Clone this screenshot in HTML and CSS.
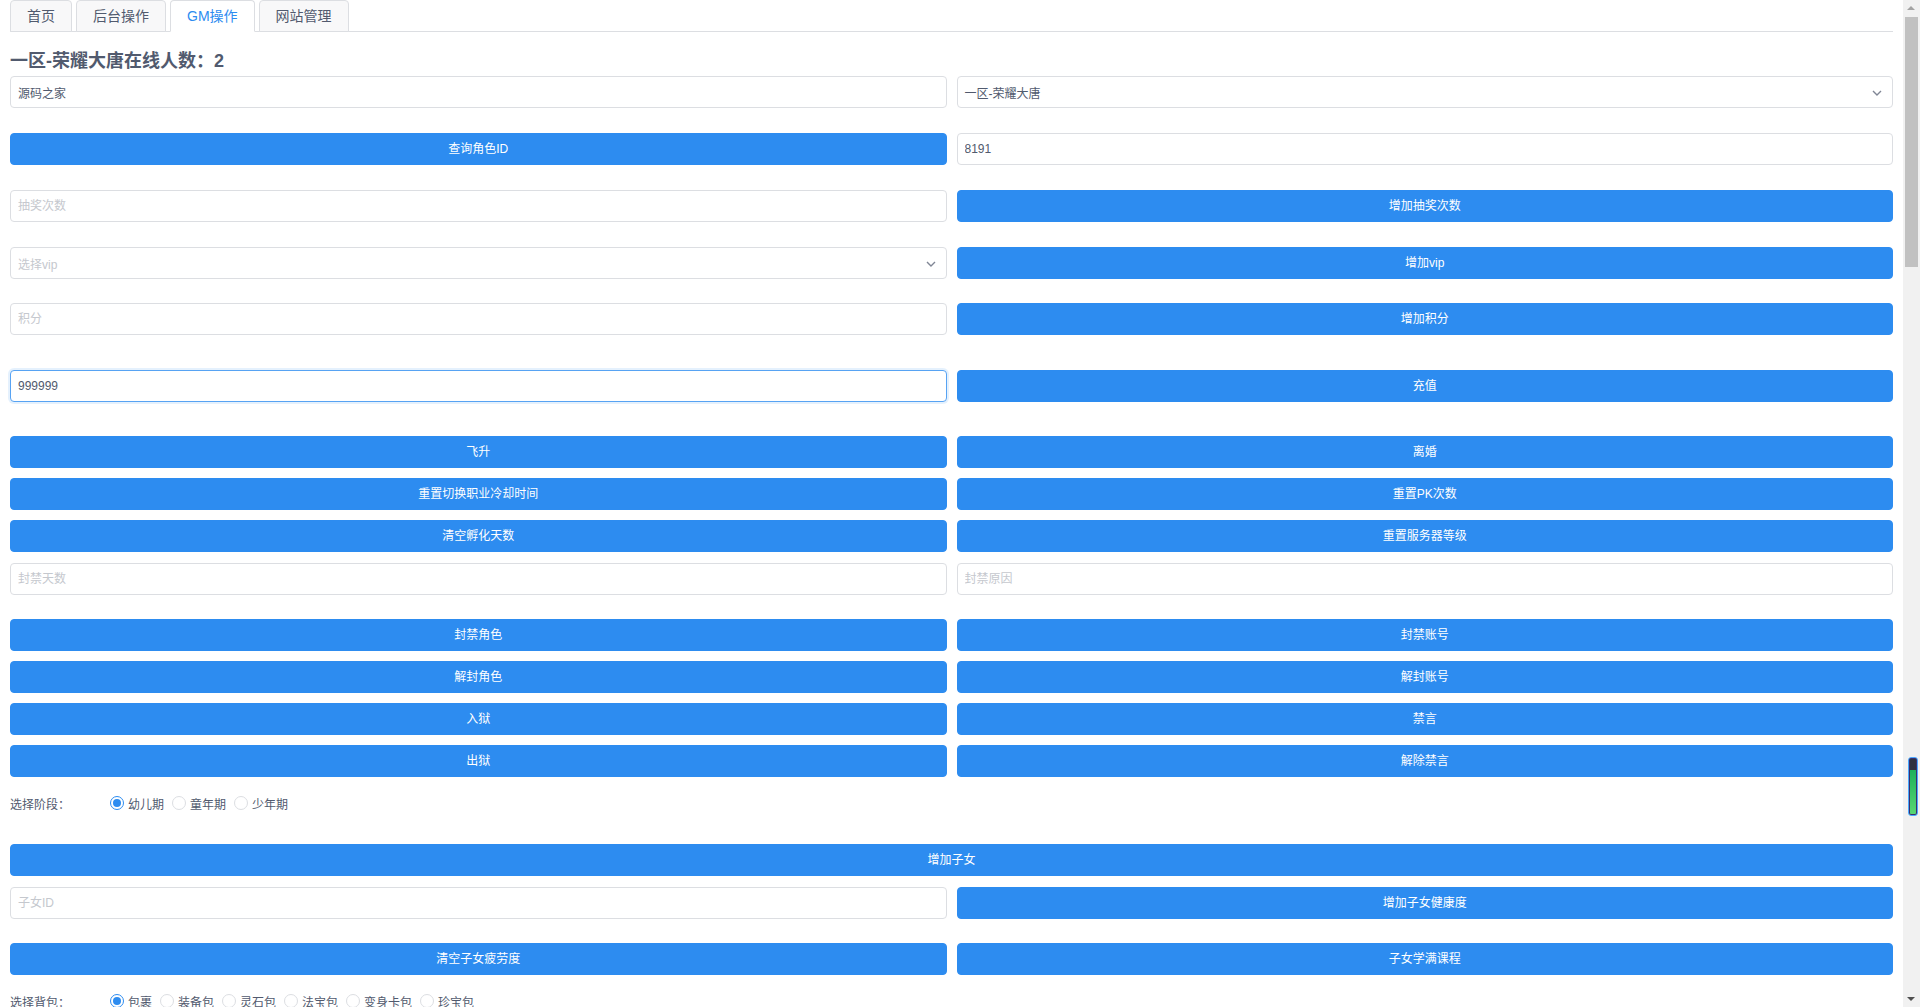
FILE: index.html
```html
<!DOCTYPE html>
<html lang="zh-CN">
<head>
  <meta charset="UTF-8" />
  <meta name="viewport" content="width=device-width, initial-scale=1.0"/>
  <title>GM操作</title>
  <link rel="stylesheet" href="styles.css">
</head>
<body>

  <!-- 顶部标签页 -->
  <div class="tabs">
    <div class="tab">首页</div>
    <div class="tab">后台操作</div>
    <div class="tab active">GM操作</div>
    <div class="tab">网站管理</div>
  </div>

  <div class="panel">
    <h3 class="online">一区-荣耀大唐在线人数：2</h3>

    <div class="row">
      <input class="ipt" type="text" value="源码之家" />
      <div class="select">
        <span>一区-荣耀大唐</span>
        <svg class="arrow" viewBox="0 0 12 12"><polyline points="2,4 6,8 10,4" /></svg>
      </div>
    </div>

    <div class="row m25">
      <button class="btn">查询角色ID</button>
      <input class="ipt" type="text" value="8191" />
    </div>

    <div class="row m25">
      <input class="ipt" type="text" placeholder="抽奖次数" />
      <button class="btn">增加抽奖次数</button>
    </div>

    <div class="row m25">
      <div class="select">
        <span class="ph">选择vip</span>
        <svg class="arrow" viewBox="0 0 12 12"><polyline points="2,4 6,8 10,4" /></svg>
      </div>
      <button class="btn">增加vip</button>
    </div>

    <div class="row m24">
      <input class="ipt" type="text" placeholder="积分" />
      <button class="btn">增加积分</button>
    </div>

    <div class="row m35">
      <input class="ipt focus" type="text" value="999999" />
      <button class="btn">充值</button>
    </div>

    <div class="row m34">
      <button class="btn">飞升</button>
      <button class="btn">离婚</button>
    </div>
    <div class="row">
      <button class="btn">重置切换职业冷却时间</button>
      <button class="btn">重置PK次数</button>
    </div>
    <div class="row">
      <button class="btn">清空孵化天数</button>
      <button class="btn">重置服务器等级</button>
    </div>

    <div class="row m11">
      <input class="ipt" type="text" placeholder="封禁天数" />
      <input class="ipt" type="text" placeholder="封禁原因" />
    </div>

    <div class="row m24">
      <button class="btn">封禁角色</button>
      <button class="btn">封禁账号</button>
    </div>
    <div class="row">
      <button class="btn">解封角色</button>
      <button class="btn">解封账号</button>
    </div>
    <div class="row">
      <button class="btn">入狱</button>
      <button class="btn">禁言</button>
    </div>
    <div class="row">
      <button class="btn">出狱</button>
      <button class="btn">解除禁言</button>
    </div>

    <!-- 子女 -->
    <div class="radio-row">
      <label class="radio-label">选择阶段：</label>
      <span class="radio checked"><i></i>幼儿期</span>
      <span class="radio"><i></i>童年期</span>
      <span class="radio"><i></i>少年期</span>
    </div>

    <div class="row m25 single">
      <button class="btn">增加子女</button>
    </div>
    <div class="row m11">
      <input class="ipt" type="text" placeholder="子女ID" />
      <button class="btn">增加子女健康度</button>
    </div>
    <div class="row m24">
      <button class="btn">清空子女疲劳度</button>
      <button class="btn">子女学满课程</button>
    </div>

    <!-- 背包 -->
    <div class="radio-row">
      <label class="radio-label">选择背包：</label>
      <span class="radio checked"><i></i>包裹</span>
      <span class="radio"><i></i>装备包</span>
      <span class="radio"><i></i>灵石包</span>
      <span class="radio"><i></i>法宝包</span>
      <span class="radio"><i></i>变身卡包</span>
      <span class="radio"><i></i>珍宝包</span>
    </div>
  </div>

  <!-- 页面滚动条 -->
  <div class="scrollbar">
    <span class="sb-btn up"></span>
    <span class="sb-thumb"></span>
    <span class="sb-btn down"></span>
  </div>

  <!-- 右侧浮动小工具 -->
  <div class="float-bar"></div>

</body>
</html>
```

FILE: styles.css
```css
:root {
  --primary: #2d8cf0;
  --border: #dcdee2;
  --text: #515a6e;
  --placeholder: #c5c8ce;
}

* {
  box-sizing: border-box;
}

html, body {
  height: 100%;
  overflow: hidden;
}

body {
  margin: 0;
  padding: 0 27px 0 10px;
  font-family: "Liberation Sans", "Noto Sans CJK SC", sans-serif;
  font-size: 12px;
  color: var(--text);
  background: #fff;
}

/* 标签页 */
.tabs {
  display: flex;
  height: 32px;
  border-bottom: 1px solid var(--border);
  margin-bottom: 16px;
}

.tab {
  height: 32px;
  padding: 5px 16px 4px;
  margin-right: 4px;
  font-size: 14px;
  line-height: 21px;
  background: #f8f8f9;
  border: 1px solid var(--border);
  border-radius: 4px 4px 0 0;
  color: var(--text);
}

.tab.active {
  background: #fff;
  color: var(--primary);
  border-bottom-color: #fff;
}

.online {
  margin: 0 0 2px;
  font-size: 18px;
  line-height: 26px;
  font-weight: bold;
  color: #515a6e;
}

/* 两列行 */
.row {
  display: grid;
  grid-template-columns: 1fr 1fr;
  column-gap: 10px;
  margin-top: 10px;
}

.row.single {
  grid-template-columns: 1fr;
}

.row:first-of-type { margin-top: 0; }
.row.m11 { margin-top: 11px; }
.row.m24 { margin-top: 24px; }
.row.m25 { margin-top: 25px; }
.row.m34 { margin-top: 34px; }
.row.m35 { margin-top: 35px; }

.ipt, .select {
  height: 32px;
  width: 100%;
  padding: 4px 7px;
  font: inherit;
  font-size: 12px;
  color: var(--text);
  background: #fff;
  border: 1px solid var(--border);
  border-radius: 4px;
  outline: none;
}

.ipt::placeholder {
  color: var(--placeholder);
}

.ipt.focus {
  border-color: #57a3f3;
  box-shadow: 0 0 0 2px rgba(45, 140, 240, 0.12);
}

.select {
  display: flex;
  align-items: center;
  justify-content: space-between;
}

.select .ph {
  color: var(--placeholder);
}

.arrow {
  width: 12px;
  height: 12px;
  margin: 1px 2px 0 0;
  fill: none;
  stroke: #808695;
  stroke-width: 1.4;
}

.btn {
  height: 32px;
  width: 100%;
  padding: 0 15px 4px;
  font: inherit;
  font-size: 12px;
  color: #fff;
  background: var(--primary);
  border: 1px solid var(--primary);
  border-radius: 4px;
  cursor: pointer;
}

/* 单选组 */
.radio-row {
  display: flex;
  align-items: center;
  height: 32px;
  margin-top: 10px;
}

.radio-label {
  width: 100px;
}

.radio {
  display: flex;
  align-items: center;
  margin-right: 8px;
}

.radio i {
  width: 14px;
  height: 14px;
  margin-right: 4px;
  border: 1px solid var(--border);
  border-radius: 50%;
  position: relative;
}

.radio.checked i {
  border-color: var(--primary);
}

.radio.checked i::after {
  content: "";
  position: absolute;
  left: 2px;
  top: 2px;
  width: 8px;
  height: 8px;
  border-radius: 50%;
  background: var(--primary);
}

/* 滚动条 */
.scrollbar {
  position: fixed;
  top: 0;
  right: 0;
  width: 17px;
  height: 100%;
  display: flex;
  flex-direction: column;
  background: #f1f1f1;
}

.sb-btn {
  height: 17px;
  position: relative;
}

.sb-btn::after {
  content: "";
  position: absolute;
  left: 4px;
  border-left: 4px solid transparent;
  border-right: 4px solid transparent;
}

.sb-btn.up::after {
  top: 6px;
  border-bottom: 4px solid #a3a3a3;
}

.sb-btn.down {
  margin-top: auto;
}

.sb-btn.down::after {
  top: 7px;
  border-top: 4px solid #505050;
}

.sb-thumb {
  height: 250px;
  margin: 0 2px;
  background: #c1c1c1;
}

.float-bar {
  position: fixed;
  left: 1908px;
  top: 757px;
  width: 10px;
  height: 59px;
  border: 1px solid #4aa8ff;
  border-radius: 3px;
  box-shadow: inset 0 0 0 1px #3b2f6e;
  background: linear-gradient(#2e3140 0, #2e3140 12px, #1db05a 12px, #58d872 100%);
}
```
